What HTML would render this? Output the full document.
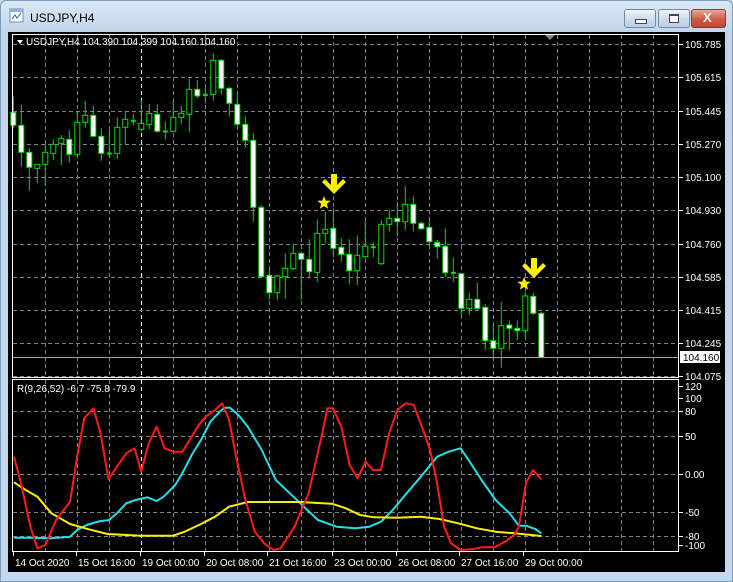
<!DOCTYPE html>
<html><head><meta charset="utf-8"><style>
html,body{margin:0;padding:0;width:733px;height:582px;overflow:hidden;background:#c4d9ee;font-family:"Liberation Sans",sans-serif}
#frame{position:absolute;left:0;top:0;width:731px;height:580px;border:1px solid #7f9db9;background:linear-gradient(#dbe8f5,#c2d7ec 30px,#c4d9ee);border-radius:6px 6px 0 0}
#title{position:absolute;left:30px;top:11px;font-size:12px;color:#000}
.btn{position:absolute;top:9px;height:17px;border:1px solid #6d8bab;border-radius:3px;background:linear-gradient(#f2f6fb,#cfdceb 50%,#bccde2)}
#close{background:linear-gradient(#e9a99a,#d0604a 50%,#c0452e);border-color:#8a3b2e}
#chart{position:absolute;left:8px;top:32px;width:717px;height:540px;background:#000}
svg text{font-family:"Liberation Sans",sans-serif;font-size:10px;fill:#fff}
</style></head><body>
<div id="frame"></div>
<svg style="position:absolute;left:9px;top:8px" width="16" height="16" viewBox="0 0 16 16"><rect x="1" y="1" width="13" height="13" fill="#fff" stroke="#6a8fbf"/><rect x="1" y="1" width="13" height="3" fill="#8fb4e0"/><path d="M3 11 L6 7 L8 10 L12 5" stroke="#2a5fa8" fill="none"/></svg>
<div id="title">USDJPY,H4</div>
<div class="btn" style="left:624px;width:30px"><div style="position:absolute;left:10px;top:9px;width:10px;height:3px;background:#fff;border:1px solid #445"></div></div>
<div class="btn" style="left:658px;width:30px"><div style="position:absolute;left:10px;top:4px;width:8px;height:6px;border:1px solid #445;border-top-width:2px;background:#fff"></div></div>
<div class="btn" id="close" style="left:691px;width:33px"><div style="position:absolute;left:11px;top:0px;color:#fff;font-weight:bold;font-size:13px">X</div></div>
<div id="chart"></div>
<svg id="s" style="position:absolute;left:0;top:0" width="733" height="582"></svg>
<script>
var s=document.getElementById('s'),h='';
function L(x1,y1,x2,y2,c,d,w){h+='<line x1="'+x1+'" y1="'+y1+'" x2="'+x2+'" y2="'+y2+'" stroke="'+c+'" stroke-width="'+(w||1)+'"'+(d?' stroke-dasharray="'+d+'"':'')+'/>';}
for(var x=45;x<679;x+=32){var c=(x==141||x==381)?'#fff':'#7a828c';L(x+.5,35,x+.5,377,c,'4,3');L(x+.5,380,x+.5,551,c,'4,3');}
var pl=[[44,'105.785'],[77,'105.615'],[111,'105.445'],[144,'105.270'],[177,'105.100'],[210,'104.930'],[244,'104.760'],[277,'104.585'],[310,'104.415'],[343,'104.245'],[376,'104.075']];
pl.forEach(function(p){L(13,p[0]+.5,678,p[0]+.5,'#7a828c','4,3');L(679,p[0]+.5,683,p[0]+.5,'#fff');h+='<text x="685" y="'+(p[0]+4)+'">'+p[1]+'</text>';});
var il=[[386,'120',0],[398,'100',0],[411,'80',1],[436,'50',1],[474,'0.00',1],[512,'-50',1],[536,'-80',1],[545,'-100',0]];
il.forEach(function(p){if(p[2])L(13,p[0]+.5,678,p[0]+.5,'#7a828c','4,3');L(679,p[0]+.5,683,p[0]+.5,'#fff');h+='<text x="685" y="'+(p[0]+4)+'">'+p[1]+'</text>';});
var A=[[140,235,187,226,1],[165,350,226,307,1],[295,422,307,352,1],[343,400,343,355,0],[280,408,307,343,0],[268,330,283,310,0],[255,345,265,280,0],[240,338,268,313,1],[185,322,217,313,0],[153,233,196,217,0],[168,262,196,259,1],[235,332,259,310,1],[240,320,309,312,2],[202,326,232,310,0],[183,285,208,232,0],[193,225,211,214,2],[150,245,220,238,0],[162,238,190,223,0],[163,248,193,244,1],[215,268,243,246,2],[152,246,202,244,0],[168,223,190,202,0],[85,247,118,193,0],[90,145,118,138,1],[113,160,133,136,2],[10,152,31,133,0],[27,133,31,115,1],[111,200,115,160,1],[133,230,163,223,1],[198,292,223,271,1],[250,515,271,472,1],[465,682,472,680,1]];
var B=[[300,390,316,368,1],[315,390,318,368,0],[250,385,295,320,0],[222,300,250,296,0],[245,390,250,268,1],[208,322,268,305,1],[148,335,190,307,0],[125,220,178,190,0],[115,262,175,235,1],[205,275,232,253,1],[208,342,253,302,1],[196,345,256,302,0],[148,265,229,260,0],[217,262,229,234,2],[150,285,163,281,0],[120,185,145,163,0],[95,200,145,155,1],[48,180,103,155,0],[80,183,103,160,1],[155,180,160,176,1],[145,230,172,215,1],[210,265,217,230,1],[175,320,229,308,1],[262,335,306,311,2],[308,435,311,415,1],[368,435,388,415,0],[338,420,388,415,1],[402,540,412,512,1],[458,570,512,535,1],[397,592,467,535,0],[452,540,465,475,1],[452,510,475,482,1],[365,500,378,482,0],[368,435,379,430,1],[425,562,430,562,1]];
function C(i,o,d){var x=13.3+8*i;L(x,o+d[0]/3,x,o+d[1]/3,'#00e000');var t=o+d[2]/3,b=o+d[3]/3;
if(d[4]==2){L(x-2.5,(t+b)/2,x+2.5,(t+b)/2,'#00e000',0,2);return;}
h+='<rect x="'+(x-2.5)+'" y="'+t+'" width="5" height="'+Math.max(1,b-t)+'" fill="'+(d[4]?'#fff':'#000')+'" stroke="#00e000" stroke-width="1"/>';}
A.forEach(function(d,i){C(i,50,d);});B.forEach(function(d,i){C(i+32,170,d);});
L(13,357.5,678,357.5,'#a0a0a0');
h+='<rect x="680" y="351" width="40" height="12" fill="#fff"/><text x="683" y="361" style="fill:#000">104.160</text>';
function AR(x,y){h+='<path d="M'+(x-3)+' '+y+' h6 v11 l6 -6 l3 3 l-12 12 l-12 -12 l3 -3 l6 6z" fill="#ffee00"/>';}
function ST(x,y){var p='';for(var k=0;k<10;k++){var r=k%2?3:7,a=-Math.PI/2+k*Math.PI/5;p+=(x+r*Math.cos(a)).toFixed(1)+','+(y+r*Math.sin(a)).toFixed(1)+' ';}h+='<polygon points="'+p+'" fill="#ffee00"/>';}
AR(334,174);ST(324,203);AR(534,258);ST(524,284);
function P(pts,c){var q=[];for(var k=0;k<pts.length;k+=2)q.push((pts[k]/2.139).toFixed(1)+','+(340+pts[k+1]/3).toFixed(1));h+='<polyline points="'+q.join(' ')+'" fill="none" stroke="'+c+'" stroke-width="2" stroke-linejoin="round"/>';}
P([30,593,70,593,110,595,150,590,165,570,185,555,215,543,232,541,250,520,270,490,290,480,315,472,335,483,350,470,375,435,390,400,410,345,430,300,450,245,470,215,480,203,492,203,510,225,530,260,560,330,590,420,620,460,650,500,680,540,720,560,760,565,790,560,815,545,840,510,870,460,900,410,935,350,960,335,985,325,1000,355,1030,420,1060,480,1090,520,1110,557,1125,557,1145,567,1158,580],'#22e0e8');
P([30,427,55,450,80,470,110,520,150,552,190,568,230,582,300,587,370,587,395,575,430,552,460,530,490,500,530,486,640,486,710,491,740,505,770,525,800,532,850,533,900,530,940,537,980,550,1020,565,1060,575,1100,580,1158,588],'#ffee00');
P([30,350,45,430,65,560,80,625,97,615,120,540,150,485,165,350,180,235,200,205,215,280,232,418,250,380,270,340,288,325,302,395,318,310,335,260,352,325,370,335,390,335,410,290,425,255,440,230,460,210,475,190,490,240,505,350,525,480,545,575,565,610,585,630,600,625,630,560,660,460,690,275,700,205,712,205,730,260,748,375,765,415,782,365,798,390,815,390,832,280,850,210,868,190,885,195,905,270,920,330,935,430,950,560,965,610,985,630,1010,628,1030,622,1058,622,1080,605,1100,585,1110,560,1125,430,1140,390,1158,418],'#ff1a1a');
h+='<rect x="12.5" y="34.5" width="666" height="343" fill="none" stroke="#fff"/>';
h+='<rect x="12.5" y="379.5" width="666" height="172" fill="none" stroke="#fff"/>';
h+='<path d="M545 35 l5 5 l5 -5z" fill="#888"/>';
h+='<path d="M17 40 l3 4 l3 -4z" fill="#fff"/><text x="26" y="45">USDJPY,H4  104.390 104.399 104.160 104.160</text>';
h+='<text x="17" y="392">R(9,26,52) -6.7 -75.8 -79.9</text>';
var dl=[[14,'14 Oct 2020'],[77,'15 Oct 16:00'],[141,'19 Oct 00:00'],[205,'20 Oct 08:00'],[268,'21 Oct 16:00'],[333,'23 Oct 00:00'],[397,'26 Oct 08:00'],[460,'27 Oct 16:00'],[524,'29 Oct 00:00']];
dl.forEach(function(d){L(d[0]-.5,552,d[0]-.5,556,'#fff');h+='<text x="'+(d[0]+1)+'" y="566">'+d[1]+'</text>';});
s.innerHTML=h;
</script>
</body></html>
